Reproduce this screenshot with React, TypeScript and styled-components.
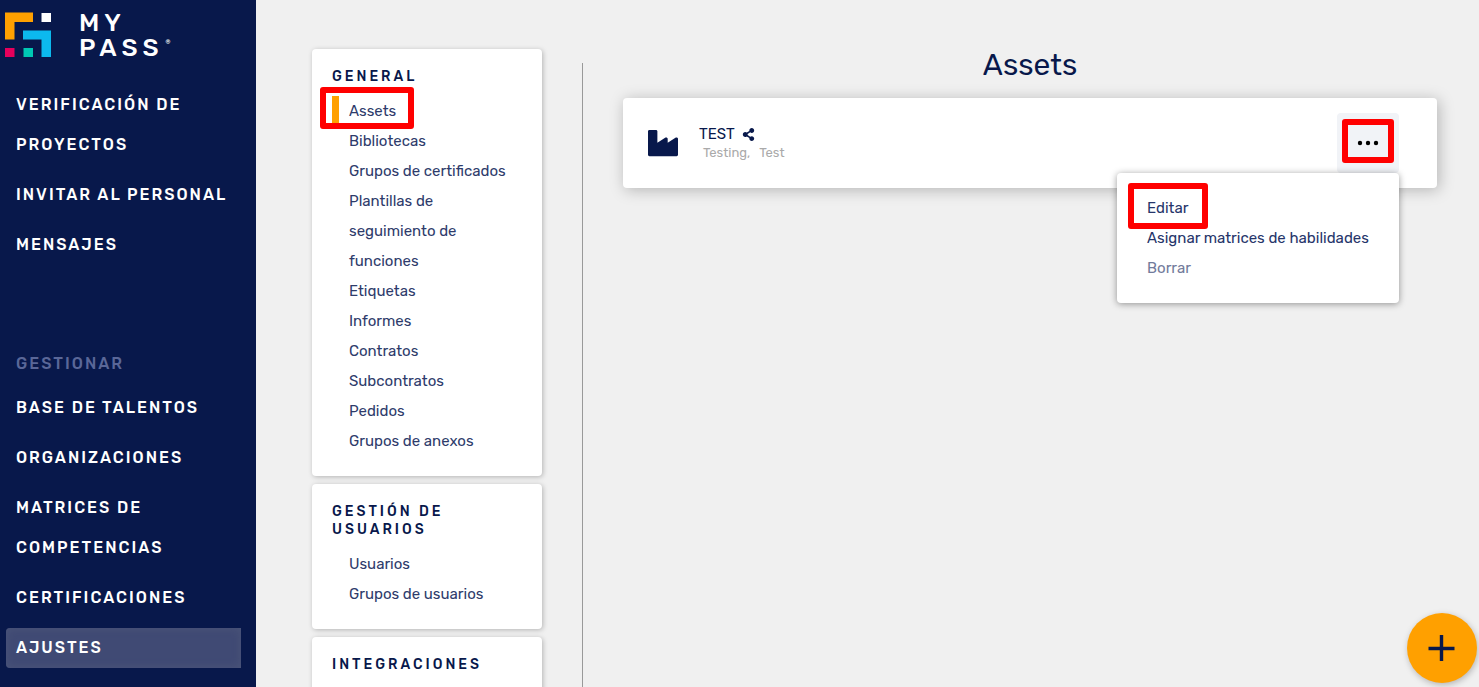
import React from "react";
import styled, { createGlobalStyle, css } from "styled-components";
import { FaIndustry, FaShareAlt } from "react-icons/fa";

const navy = "#08184b";
const orange = "#ffa000";

const GlobalStyle = createGlobalStyle`
  *, *::before, *::after { box-sizing: border-box; }
  body {
    margin: 0;
    background: #f0f0f0;
    color: ${navy};
    font-family: Rubik, Roboto, "Liberation Sans", sans-serif;
    font-size: 15px;
    font-weight: 400;
  }
  a { color: inherit; text-decoration: none; }
  ul { list-style: none; margin: 0; padding: 0; }
  button { font: inherit; color: inherit; border: 0; padding: 0; cursor: pointer; }
`;

const Page = styled.div`
  display: flex;
  height: 100vh;
  overflow: hidden;
`;

const Sidebar = styled.aside`
  flex: 0 0 256px;
  background: ${navy};
  color: #fff;
`;

const Brand = styled.a`
  display: flex;
  gap: 27px;
  height: 85px;
  padding: 10px 5px;
`;

const LogoMark = styled.svg`
  flex: none;
  width: 47px;
  height: 50px;
`;

const Wordmark = styled.span`
  font-size: 25px;
  font-weight: 500;
  line-height: 25px;
  letter-spacing: 5px;
`;

const Registered = styled.sup`
  margin-left: 2px;
  font-size: 6px;
  line-height: 6px;
  vertical-align: 12px;
`;

const NavList = styled.ul`
  display: flex;
  flex-direction: column;
  gap: 10px;
  padding: 0 15px 0 6px;
`;

const NavLink = styled.a<{ $active?: boolean }>`
  display: block;
  padding-left: 10px;
  border-radius: 4px 0 0 4px;
  font-size: 16px;
  font-weight: 500;
  line-height: 40px;
  letter-spacing: 2px;
  text-transform: uppercase;
  ${(p) =>
    p.$active &&
    css`
      background: #404a74;
      box-shadow: inset 0 0 8px #4c5679;
    `}
`;

const NavHeading = styled.h2`
  margin: 89px 0 14px 16px;
  font-size: 16px;
  font-weight: 500;
  line-height: 20px;
  letter-spacing: 2px;
  text-transform: uppercase;
  color: #5a6798;
`;

const Main = styled.main`
  flex: 1;
  min-width: 0;
  display: flex;
  padding: 0 42px 0 56px;
`;

const SettingsColumn = styled.nav`
  flex: 0 0 230px;
  display: flex;
  flex-direction: column;
  gap: 8px;
  padding-top: 49px;
`;

const Panel = styled.section`
  flex: none;
  padding: 19px 30px 20px 20px;
  border-radius: 4px;
  background: #fff;
  box-shadow: 1px 1px 5px rgba(0, 0, 0, 0.25);
`;

const PanelTitle = styled.h2`
  margin: 0 0 10px;
  font-size: 14px;
  font-weight: 500;
  line-height: 18px;
  letter-spacing: 3px;
  text-transform: uppercase;
`;

const PanelLink = styled.a<{ $active?: boolean }>`
  position: relative;
  display: block;
  padding-left: ${(p) => (p.$active ? 10 : 17)}px;
  border-left: ${(p) => (p.$active ? 7 : 0)}px solid ${orange};
  line-height: 30px;
  color: #2e3b6b;
`;

const Highlight = styled.span<{ $top: number; $left: number; $width: number; $height: number }>`
  position: absolute;
  top: ${(p) => p.$top}px;
  left: ${(p) => p.$left}px;
  width: ${(p) => p.$width}px;
  height: ${(p) => p.$height}px;
  border: 6px solid #f00;
  border-radius: 3px;
  pointer-events: none;
`;

const Divider = styled.div`
  flex: 0 0 1px;
  margin: 63px 40px 0;
  background: #999;
`;

const Content = styled.section`
  flex: 1;
  min-width: 0;
`;

const Title = styled.h1`
  margin: 0;
  padding: 47px 0 15px;
  font-size: 30px;
  font-weight: 400;
  line-height: 36px;
  text-align: center;
`;

const AssetCard = styled.article`
  display: flex;
  align-items: center;
  height: 90px;
  padding: 0 38px 0 25px;
  border-radius: 4px;
  background: #fff;
  box-shadow: 2px 2px 15px rgba(0, 0, 0, 0.25);
`;

const AssetInfo = styled.div`
  flex: 1;
  margin-left: 21px;
`;

const AssetName = styled.div`
  display: flex;
  align-items: center;
  gap: 7px;
  line-height: 20px;
`;

const AssetTags = styled.ul`
  display: flex;
  gap: 9px;
  padding-left: 4px;
  font-size: 13px;
  line-height: 18px;
  color: #aaa;
`;

const MenuAnchor = styled.div`
  position: relative;
`;

const MoreButton = styled.button`
  display: flex;
  align-items: center;
  justify-content: center;
  width: 62px;
  height: 60px;
  border-radius: 4px;
  background: #f1f3f7;
`;

const Menu = styled.ul`
  position: absolute;
  top: 60px;
  right: 0;
  min-width: 282px;
  padding: 20px 30px;
  border-radius: 4px;
  background: #fff;
  box-shadow: 0 1px 7px rgba(0, 0, 0, 0.4);
`;

const MenuItem = styled.button<{ $muted?: boolean }>`
  display: block;
  background: none;
  line-height: 30px;
  white-space: nowrap;
  color: ${(p) => (p.$muted ? "#727b9b" : "#26356a")};
`;

const AddButton = styled.button`
  position: fixed;
  right: 2px;
  bottom: 4px;
  display: flex;
  align-items: center;
  justify-content: center;
  width: 70px;
  height: 70px;
  border-radius: 50%;
  background: ${orange};
  box-shadow: 1px 2px 6px rgba(0, 0, 0, 0.25);
`;

const mainNav = ["Verificación de proyectos", "Invitar al personal", "Mensajes"];
const manageNav = ["Base de talentos", "Organizaciones", "Matrices de competencias", "Certificaciones", "Ajustes"];

const panels = [
  {
    title: "General",
    links: [
      "Assets",
      "Bibliotecas",
      "Grupos de certificados",
      "Plantillas de seguimiento de funciones",
      "Etiquetas",
      "Informes",
      "Contratos",
      "Subcontratos",
      "Pedidos",
      "Grupos de anexos",
    ],
  },
  { title: "Gestión de usuarios", links: ["Usuarios", "Grupos de usuarios"] },
  { title: "Integraciones", links: [] as string[] },
];

function Logo() {
  return (
    <LogoMark viewBox="0 0 47 50" aria-hidden="true">
      <path d="M0 2.5H28V12H9.5V29.5H0Z" fill={orange} />
      <path d="M36.5 3H46V12H36.5Z" fill="#fff" />
      <path d="M18 20.5H46V47H36.5V29.5H18Z" fill="#0cb9ee" />
      <path d="M0 38H9.5V47H0Z" fill="#e6005c" />
      <path d="M18.5 38H28V47H18.5Z" fill="#00c8b4" />
    </LogoMark>
  );
}

function Nav({ items }: { items: string[] }) {
  return (
    <NavList>
      {items.map((item) => (
        <li key={item}>
          <NavLink href="#" $active={item === "Ajustes"}>
            {item}
          </NavLink>
        </li>
      ))}
    </NavList>
  );
}

export default function App() {
  return (
    <Page>
      <GlobalStyle />
      <Sidebar>
        <Brand href="#">
          <Logo />
          <Wordmark>
            MY
            <br />
            PASS<Registered>®</Registered>
          </Wordmark>
        </Brand>
        <Nav items={mainNav} />
        <NavHeading>Gestionar</NavHeading>
        <Nav items={manageNav} />
      </Sidebar>
      <Main>
        <SettingsColumn aria-label="Ajustes">
          {panels.map((panel) => (
            <Panel key={panel.title}>
              <PanelTitle>{panel.title}</PanelTitle>
              <ul>
                {panel.links.map((link) => (
                  <li key={link}>
                    <PanelLink href="#" $active={link === "Assets"}>
                      {link}
                      {link === "Assets" && <Highlight $top={-9} $left={-19} $width={94} $height={42} />}
                    </PanelLink>
                  </li>
                ))}
              </ul>
            </Panel>
          ))}
        </SettingsColumn>
        <Divider />
        <Content>
          <Title>Assets</Title>
          <AssetCard>
            <FaIndustry size={30} aria-hidden="true" />
            <AssetInfo>
              <AssetName>
                TEST
                <FaShareAlt size={13} aria-hidden="true" />
              </AssetName>
              <AssetTags>
                <li>Testing,</li>
                <li>Test</li>
              </AssetTags>
            </AssetInfo>
            <MenuAnchor>
              <MoreButton aria-label="Acciones" aria-expanded="true">
                <svg width="22" height="6" viewBox="0 0 22 6" fill="#000" aria-hidden="true">
                  <circle cx="3" cy="3" r="2.2" />
                  <circle cx="11" cy="3" r="2.2" />
                  <circle cx="19" cy="3" r="2.2" />
                </svg>
              </MoreButton>
              <Highlight $top={6} $left={5} $width={52} $height={44} />
              <Menu>
                <li>
                  <MenuItem>Editar</MenuItem>
                  <Highlight $top={10} $left={11} $width={80} $height={46} />
                </li>
                <li>
                  <MenuItem>Asignar matrices de habilidades</MenuItem>
                </li>
                <li>
                  <MenuItem $muted>Borrar</MenuItem>
                </li>
              </Menu>
            </MenuAnchor>
          </AssetCard>
        </Content>
      </Main>
      <AddButton aria-label="Añadir">
        <svg width="28" height="28" viewBox="0 0 28 28" aria-hidden="true">
          <path d="M13.5 1V27M0.5 14.5H26.5" stroke={navy} strokeWidth="3.4" />
        </svg>
      </AddButton>
    </Page>
  );
}
